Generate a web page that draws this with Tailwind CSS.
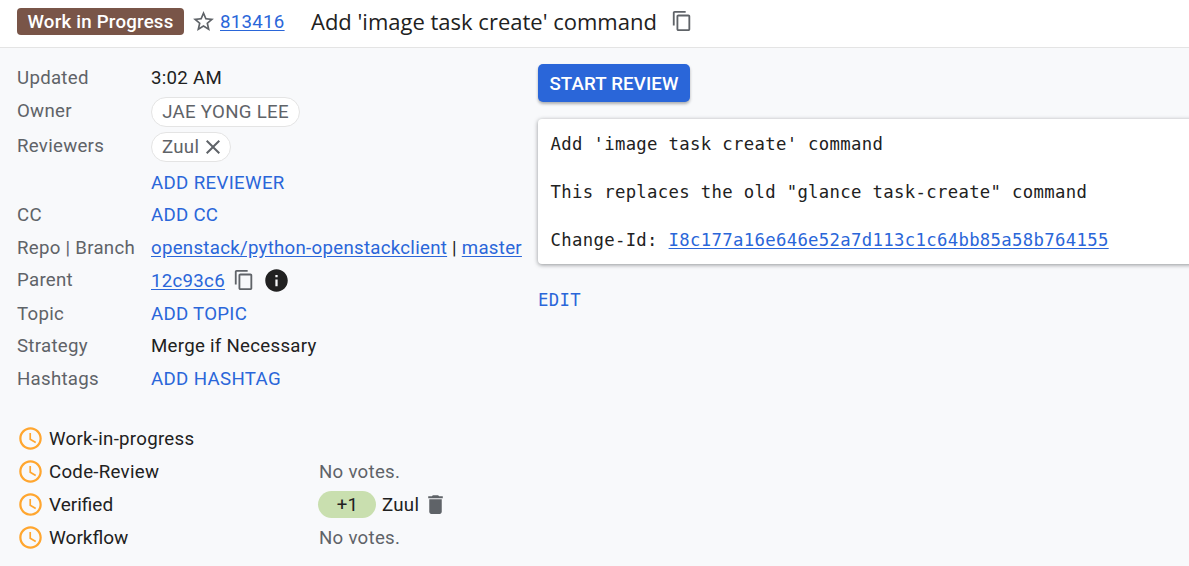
<!DOCTYPE html>
<html lang="en">
<head>
<meta charset="utf-8">
<title>Add 'image task create' command</title>
<script src="https://cdn.jsdelivr.net/npm/@tailwindcss/browser@4"></script>
</head>
<body class="h-[566px] overflow-hidden bg-[#f8f9fb] font-['Roboto',sans-serif] text-[18.67px] leading-6 tracking-[0.28px] text-[#212121]">
<svg class="hidden">
  <symbol id="copy" viewBox="0 0 24 24"><path d="M16 1H4c-1.100 0-2 .9-2 2v14h2V3h12V1zm3 4H8c-1.100 0-2 .9-2 2v14c0 1.100.9 2 2 2h11c1.100 0 2-.9 2-2V7c0-1.100-.9-2-2-2zm0 16H8V7h11v14z"/></symbol>
  <symbol id="clock" viewBox="0 0 24 24"><path d="M11.990 2C6.470 2 2 6.480 2 12s4.470 10 9.990 10C17.520 22 22 17.520 22 12S17.520 2 11.990 2zM12 20c-4.420 0-8-3.580-8-8s3.580-8 8-8 8 3.580 8 8-3.580 8-8 8zm.5-13H11v6l5.250 3.150.75-1.230-4.500-2.670z"/></symbol>
</svg>
<header class="flex h-12 items-center border-b border-[#e4e4e4] bg-white pb-1 pl-[17px]">
  <span class="flex h-[27px] w-[167px] items-center justify-center rounded bg-[#795548] font-medium tracking-[0.22px] text-white">Work in Progress</span>
  <svg class="ml-[7px] size-[25px] fill-[#5f6368]" viewBox="0 0 24 24"><path d="M22 9.240l-7.190-.62L12 2 9.190 8.630 2 9.240l5.460 4.730L5.820 21 12 17.270 18.180 21l-1.630-7.030L22 9.240zM12 15.400l-3.760 2.270 1-4.280-3.320-2.880 4.380-.38L12 6.100l1.710 4.040 4.380.38-3.320 2.880 1 4.280L12 15.400z"/></svg>
  <a class="ml-1 w-[65px] text-[#2a66d9] underline underline-offset-2 whitespace-nowrap">813416</a>
  <h1 class="-mt-0.5 ml-[26px] w-[348px] whitespace-nowrap font-['Open_Sans',sans-serif] text-[22px] tracking-[0px]">Add 'image task create' command</h1>
  <svg class="-mt-px ml-[12px] size-[22px] fill-[#5f6368]"><use href="#copy"/></svg>
</header>
<main class="flex">
  <section class="w-[538px] shrink-0 pl-[17px] pt-[13px] whitespace-nowrap">
    <div class="flex h-[33px] items-center"><span class="w-[134px] text-[#5f6368]">Updated</span><span>3:02 AM</span></div>
    <div class="flex h-[35px] items-start pt-[3px]"><span class="w-[134px] pt-[2px] text-[#5f6368]">Owner</span><span class="flex h-[30px] w-[149px] items-center justify-center rounded-full border border-[#e4e4e4] bg-white text-[#5f6368]">JAE YONG LEE</span></div>
    <div class="flex h-9 items-start pt-[3px]"><span class="w-[134px] pt-[2px] text-[#5f6368]">Reviewers</span><span class="flex h-[30px] w-20 items-center rounded-full border border-[#e4e4e4] bg-white pl-[10px] text-[#5f6368]">Zuul<svg class="ml-[2px] size-[24px] shrink-0 fill-[#5f6368]" viewBox="0 0 24 24"><path d="M19 6.410L17.590 5 12 10.590 6.410 5 5 6.410 10.590 12 5 17.590 6.410 19 12 13.410 17.590 19 19 17.590 13.410 12z"/></svg></span></div>
    <div class="flex h-[33px] items-center pl-[134px] pt-[2px] text-[#2a66d9] tracking-[0.34px]">ADD REVIEWER</div>
    <div class="flex h-[33px] items-center"><span class="w-[134px] text-[#5f6368]">CC</span><span class="text-[#2a66d9]">ADD CC</span></div>
    <div class="flex h-[33px] items-center"><span class="w-[134px] text-[#5f6368]">Repo | Branch</span><span><a class="text-[#2a66d9] underline underline-offset-2">openstack/python-openstackclient</a> | <a class="text-[#2a66d9] underline underline-offset-2">master</a></span></div>
    <div class="flex h-[33px] items-center"><span class="w-[134px] pb-[2px] text-[#5f6368]">Parent</span><a class="w-[74px] text-[#2a66d9] underline underline-offset-2">12c93c6</a><svg class="-mt-px ml-[8px] size-[22px] fill-[#5f6368]"><use href="#copy"/></svg><svg class="ml-[8px] size-[27px] fill-[#212121]" viewBox="0 0 24 24"><path d="M12 2C6.480 2 2 6.480 2 12s4.480 10 10 10 10-4.480 10-10S17.520 2 12 2zm1 15h-2v-6h2v6zm0-8h-2V7h2v2z"/></svg></div>
    <div class="flex h-[33px] items-center"><span class="w-[134px] text-[#5f6368]">Topic</span><span class="text-[#2a66d9]">ADD TOPIC</span></div>
    <div class="flex h-8 items-center"><span class="w-[134px] text-[#5f6368]">Strategy</span><span>Merge if Necessary</span></div>
    <div class="flex h-[33px] items-center"><span class="w-[134px] text-[#5f6368]">Hashtags</span><span class="text-[#2a66d9] tracking-[0.34px]">ADD HASHTAG</span></div>
    <div class="mt-[27px]">
      <div class="flex h-[33px] items-center"><svg class="size-[27px] fill-[#ffa62f]"><use href="#clock"/></svg><span class="ml-[5px]">Work-in-progress</span></div>
      <div class="flex h-[33px] items-center"><svg class="size-[27px] fill-[#ffa62f]"><use href="#clock"/></svg><span class="ml-[5px] w-[270px]">Code-Review</span><span class="text-[#5f6368]">No votes.</span></div>
      <div class="flex h-[33px] items-center"><svg class="size-[27px] fill-[#ffa62f]"><use href="#clock"/></svg><span class="ml-[5px] w-[269px] text-[19px] tracking-[0px]">Verified</span><span class="flex h-[27px] w-[58px] items-center justify-center rounded-full bg-[#c9dfaf] pl-px">+1</span><span class="ml-[6px] w-[38px]">Zuul</span><svg class="ml-[3px] size-[25px] fill-[#5f6368]" viewBox="0 0 24 24"><path d="M6 19c0 1.100.9 2 2 2h8c1.100 0 2-.9 2-2V7H6v12zM19 4h-3.500l-1-1h-5l-1 1H5v2h14V4z"/></svg></div>
      <div class="flex h-[33px] items-center"><svg class="size-[27px] fill-[#ffa62f]"><use href="#clock"/></svg><span class="ml-[5px] w-[270px] text-[19px] tracking-[0px]">Workflow</span><span class="text-[#5f6368]">No votes.</span></div>
    </div>
  </section>
  <section class="grow pt-4">
    <button class="block h-[38px] w-[152px] whitespace-nowrap rounded-[5px] bg-[#2a66d9] pt-px font-medium tracking-[0.15px] text-white shadow-[0_2px_3px_rgba(60,64,67,0.4)]">START REVIEW</button>
    <div class="-mr-2 mt-[17px] h-[145px] rounded bg-white pl-[12.5px] pt-[13px] font-['DejaVu_Sans_Mono',monospace] text-[17.3px] tracking-[0.33px] whitespace-pre shadow-[0_1px_4px_rgba(60,64,67,0.55)]"><p>Add 'image task create' command</p><p class="mt-6">This replaces the old "glance task-create" command</p><p class="mt-6">Change-Id: <a class="text-[#2a66d9] underline underline-offset-2">I8c177a16e646e52a7d113c1c64bb85a58b764155</a></p></div>
    <div class="mt-6 font-['DejaVu_Sans_Mono',monospace] text-[17.3px] tracking-[0.33px] text-[#2a66d9]">EDIT</div>
  </section>
</main>
</body>
</html>
